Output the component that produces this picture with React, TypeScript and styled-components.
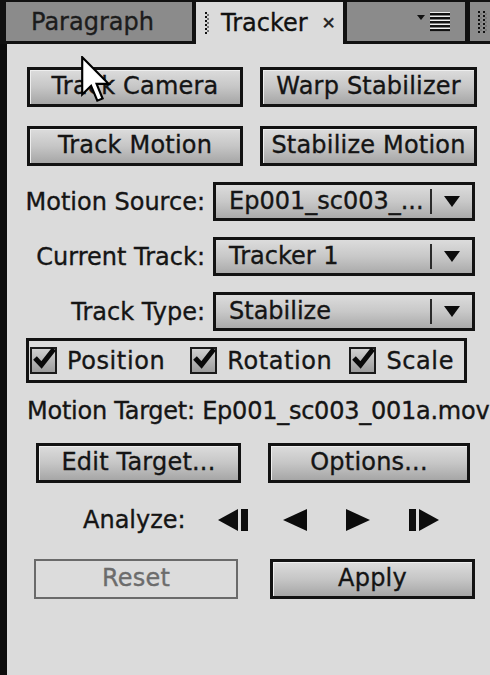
import React from "react";
import styled, { createGlobalStyle } from "styled-components";

const Global = createGlobalStyle`
  html, body { margin: 0; padding: 0; background: #dadada; overflow: hidden; }
  * { box-sizing: border-box; }
`;

const FONT = `"DejaVu Sans", Verdana, sans-serif`;

const Screen = styled.div`
  width: 490px;
  height: 675px;
  display: flex;
  flex-direction: column;
  font-family: ${FONT};
  font-size: 24px;
  -webkit-text-stroke: 0.35px currentColor;
  color: #151515;
  position: relative;
  overflow: hidden;
  background: #dbdbdb;
`;

const TabBar = styled.div`
  height: 44px;
  display: flex;
  background: #111;
  flex-shrink: 0;
`;

const Tab = styled.div<{ $w: number; $active?: boolean }>`
  width: ${(p) => p.$w}px;
  flex-shrink: 0;
  display: flex;
  align-items: center;
  background: ${(p) => (p.$active ? "#dbdbdb" : "#8b8b8b")};
  margin-top: 2px;
  margin-bottom: ${(p) => (p.$active ? "0" : "3px")};
  padding-left: ${(p) => (p.$active ? 9 : 25)}px;
  color: ${(p) => (p.$active ? "#111" : "#1c1c1c")};
  font-size: 24px;
  line-height: 1;
`;

const TabGap = styled.div<{ $w: number }>`
  width: ${(p) => p.$w}px;
  flex-shrink: 0;
`;

const TabTitle = styled.span`
  margin-left: 11px;
`;

const Close = styled.span`
  margin-left: 14px;
  font-size: 17px;
  color: #222;
`;

const MenuArea = styled.div`
  flex: 1;
  background: #8b8b8b;
  margin-top: 2px;
  margin-bottom: 3px;
  display: flex;
  align-items: center;
  justify-content: flex-end;
  padding-right: 14px;
`;

const GripArea = styled.div`
  width: 20px;
  background: #8b8b8b;
  margin-top: 2px;
  margin-bottom: 3px;
  display: flex;
  align-items: center;
  padding-left: 8px;
`;

const Body = styled.div`
  flex: 1;
  border-left: 7px solid #0c0c0c;
  display: flex;
  flex-direction: column;
  padding-top: 23px;
`;

const ButtonRow = styled.div<{ $top: number; $left: number; $gap: number }>`
  display: flex;
  margin-top: ${(p) => p.$top}px;
  padding-left: ${(p) => p.$left}px;
  gap: ${(p) => p.$gap}px;
`;

const Button = styled.div<{ $w: number; $disabled?: boolean }>`
  width: ${(p) => p.$w}px;
  height: 40px;
  display: flex;
  align-items: center;
  justify-content: center;
  border: ${(p) => (p.$disabled ? "2px solid #6a6a6a" : "3px solid #121212")};
  background: ${(p) =>
    p.$disabled ? "#dcdcdc" : "linear-gradient(#dcdcdc 0%, #c6c6c6 50%, #a6a6a6 100%)"};
  color: ${(p) => (p.$disabled ? "#6c6c6c" : "#141414")};
  box-shadow: ${(p) => (p.$disabled ? "none" : "inset 1px 1px 0 #eeeeee")};
  font-size: 24px;
  line-height: 1;
  padding-bottom: 2px;
  white-space: nowrap;
  letter-spacing: 0.2px;
`;

const FieldRow = styled.div<{ $top: number }>`
  display: grid;
  grid-template-columns: 198px 262px;
  column-gap: 8px;
  align-items: center;
  margin-top: ${(p) => p.$top}px;
`;

const Label = styled.div`
  text-align: right;
  white-space: nowrap;
  font-size: 24px;
`;

const Select = styled.div`
  height: 39px;
  border: 3px solid #121212;
  background: linear-gradient(#dcdcdc 0%, #c8c8c8 50%, #aaaaaa 100%);
  display: flex;
  align-items: center;
`;

const SelectText = styled.div`
  flex: 1;
  padding-left: 13px;
  white-space: nowrap;
  overflow: hidden;
  font-size: 24px;
  padding-bottom: 2px;
`;

const Divider = styled.div`
  width: 2px;
  height: 25px;
  background: #2a2a2a;
`;

const Arrow = styled.div`
  width: 40px;
  display: flex;
  justify-content: center;
  align-items: center;
`;

const CheckGroup = styled.div`
  margin-top: 7px;
  margin-left: 19px;
  width: 441px;
  height: 45px;
  border: 3px solid #121212;
  display: flex;
  align-items: center;
  padding-left: 1px;
`;

const CheckItem = styled.div<{ $gap: number }>`
  display: flex;
  align-items: center;
  margin-right: ${(p) => p.$gap}px;
  letter-spacing: 0.6px;
`;

const Box = styled.div`
  position: relative;
  width: 27px;
  height: 27px;
  border: 2px solid #1a1a1a;
  background: linear-gradient(#d0d0d0, #9c9c9c);
  margin-right: 10px;
`;

const CheckMark = styled.svg`
  position: absolute;
  left: 1px;
  top: -3px;
`;

const Target = styled.div`
  margin-top: 13px;
  padding-left: 20px;
  white-space: nowrap;
  font-size: 24px;
  line-height: 30px;
  letter-spacing: -0.25px;
`;

const AnalyzeRow = styled.div`
  display: flex;
  align-items: center;
  margin-top: 22px;
  padding-left: 76px;
  height: 30px;
`;

const AnalyzeLabel = styled.div`
  width: 135px;
  font-size: 24px;
`;

const IconBtn = styled.div<{ $gap: number }>`
  display: flex;
  align-items: center;
  margin-right: ${(p) => p.$gap}px;
`;

const Cursor = styled.svg`
  position: absolute;
  left: 81px;
  top: 56px;
`;

const Grip = ({ cols = 1 }: { cols?: number }) => (
  <svg width={cols * 5} height="22" viewBox={`0 0 ${cols * 5} 22`}>
    {Array.from({ length: cols }).map((_, c) =>
      [0, 1, 2, 3, 4, 5].map((r) => (
        <rect key={`${c}-${r}`} x={c * 5} y={r * 4} width="2" height="2" fill="#111" />
      ))
    )}
    {Array.from({ length: cols }).map((_, c) =>
      [0, 1, 2, 3, 4, 5].map((r) => (
        <rect key={`b${c}-${r}`} x={c * 5 + 2} y={r * 4 + 2} width="2" height="2" fill="#777" />
      ))
    )}
  </svg>
);

const Check = () => (
  <CheckMark width="24" height="24" viewBox="0 0 24 24">
    <path d="M2 12 L8.5 19 L21 3" stroke="#0a0a0a" strokeWidth="5" fill="none" strokeLinejoin="miter" />
  </CheckMark>
);

const DownArrow = () => (
  <svg width="16" height="11" viewBox="0 0 16 11">
    <path d="M0 0 H16 L8 11 Z" fill="#0c0c0c" />
  </svg>
);

const MenuIcon = () => (
  <svg width="34" height="20" viewBox="0 0 34 20">
    <path d="M0 3 H8 L4 8 Z" fill="#111" />
    <rect x="13" y="0" width="20" height="20" fill="#eee" />
    {[1, 5, 9, 13, 17].map((y) => (
      <rect key={y} x="13" y={y} width="20" height="2.5" fill="#111" />
    ))}
  </svg>
);

type Dir = "first" | "prev" | "next" | "last";
const Step = ({ d }: { d: Dir }) => {
  if (d === "first")
    return (
      <svg width="31" height="22" viewBox="0 0 31 22">
        <path d="M0 11 L20 0 V22 Z" fill="#0c0c0c" />
        <rect x="23" y="0" width="7" height="22" fill="#0c0c0c" />
      </svg>
    );
  if (d === "prev")
    return (
      <svg width="25" height="22" viewBox="0 0 25 22">
        <path d="M0 11 L24 0 V22 Z" fill="#0c0c0c" />
      </svg>
    );
  if (d === "next")
    return (
      <svg width="24" height="22" viewBox="0 0 24 22">
        <path d="M24 11 L0 0 V22 Z" fill="#0c0c0c" />
      </svg>
    );
  return (
    <svg width="30" height="22" viewBox="0 0 30 22">
      <rect x="0" y="0" width="7" height="22" fill="#0c0c0c" />
      <path d="M30 11 L10 0 V22 Z" fill="#0c0c0c" />
    </svg>
  );
};

const SelectField = ({ label, value, top }: { label: string; value: string; top: number }) => (
  <FieldRow $top={top}>
    <Label>{label}</Label>
    <Select>
      <SelectText>{value}</SelectText>
      <Divider />
      <Arrow>
        <DownArrow />
      </Arrow>
    </Select>
  </FieldRow>
);

export default function App() {
  return (
    <Screen>
      <Global />
      <TabBar>
        <TabGap $w={6} />
        <Tab $w={186}>Paragraph</Tab>
        <TabGap $w={4} />
        <Tab $w={147} $active>
          <Grip />
          <TabTitle>Tracker</TabTitle>
          <Close>✕</Close>
        </Tab>
        <TabGap $w={4} />
        <MenuArea>
          <MenuIcon />
        </MenuArea>
        <TabGap $w={5} />
        <GripArea>
          <Grip cols={2} />
        </GripArea>
      </TabBar>
      <Body>
        <ButtonRow $top={0} $left={20} $gap={17}>
          <Button $w={216}>Track Camera</Button>
          <Button $w={217}>Warp Stabilizer</Button>
        </ButtonRow>
        <ButtonRow $top={19} $left={20} $gap={17}>
          <Button $w={216}>Track Motion</Button>
          <Button $w={217}>Stabilize Motion</Button>
        </ButtonRow>
        <SelectField top={16} label="Motion Source:" value="Ep001_sc003_..." />
        <SelectField top={16} label="Current Track:" value="Tracker 1" />
        <SelectField top={16} label="Track Type:" value="Stabilize" />
        <CheckGroup>
          <CheckItem $gap={25}>
            <Box>
              <Check />
            </Box>
            Position
          </CheckItem>
          <CheckItem $gap={17}>
            <Box>
              <Check />
            </Box>
            Rotation
          </CheckItem>
          <CheckItem $gap={0}>
            <Box>
              <Check />
            </Box>
            Scale
          </CheckItem>
        </CheckGroup>
        <Target>Motion Target: Ep001_sc003_001a.mov</Target>
        <ButtonRow $top={17} $left={29} $gap={27}>
          <Button $w={205}>Edit Target...</Button>
          <Button $w={202}>Options...</Button>
        </ButtonRow>
        <AnalyzeRow>
          <AnalyzeLabel>Analyze:</AnalyzeLabel>
          <IconBtn $gap={34}>
            <Step d="first" />
          </IconBtn>
          <IconBtn $gap={38}>
            <Step d="prev" />
          </IconBtn>
          <IconBtn $gap={39}>
            <Step d="next" />
          </IconBtn>
          <IconBtn $gap={0}>
            <Step d="last" />
          </IconBtn>
        </AnalyzeRow>
        <ButtonRow $top={24} $left={27} $gap={32}>
          <Button $w={204} $disabled>
            Reset
          </Button>
          <Button $w={205}>Apply</Button>
        </ButtonRow>
      </Body>
      <Cursor width="30" height="48" viewBox="0 0 12.5 20">
        <path
          d="M0.5 0.5 L0.5 16 L4.2 12.4 L6.8 18.6 L9 17.7 L6.5 11.6 L11.5 11.6 Z"
          fill="#fff"
          stroke="#000"
          strokeWidth="0.9"
          strokeLinejoin="miter"
        />
      </Cursor>
    </Screen>
  );
}
